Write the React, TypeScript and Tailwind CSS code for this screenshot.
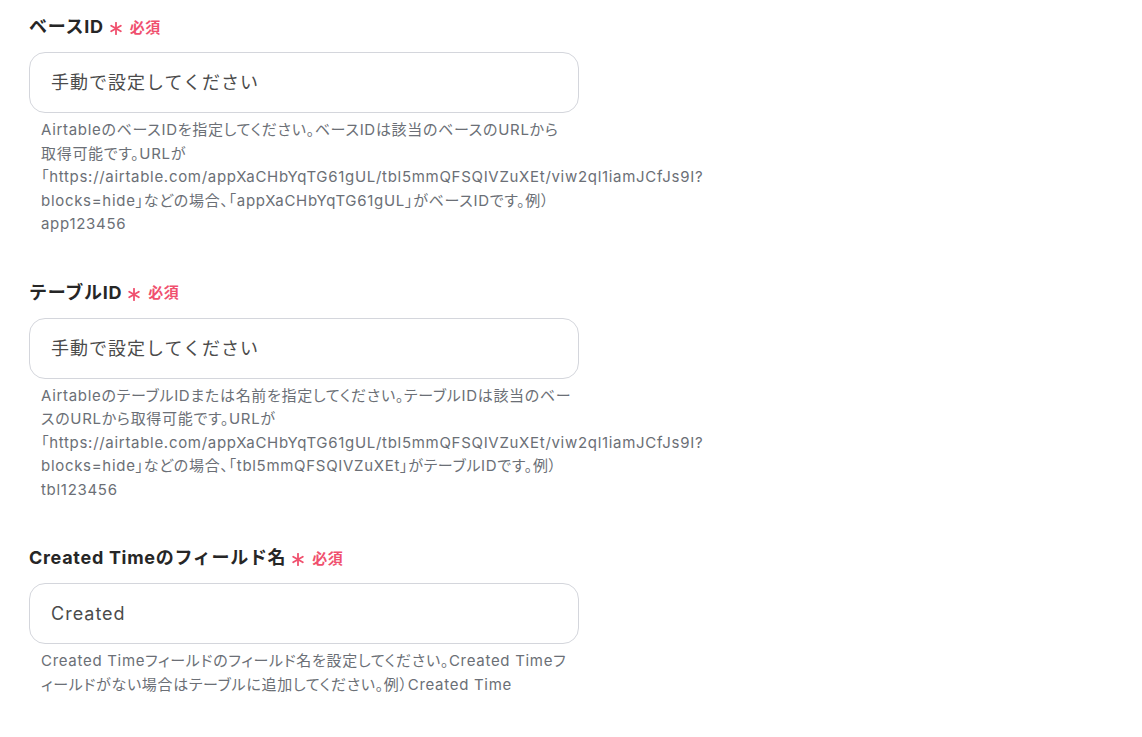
import React from "react";

const Asterisk = () => (
  <svg width="12" height="13" viewBox="0 0 12 13" className="ml-[6px] mr-[8px] mt-[3px]" aria-hidden>
    <g stroke="#f0506e" strokeWidth="1.8" strokeLinecap="round">
      <line x1="6" y1="0.8" x2="6" y2="12.2" />
      <line x1="1.2" y1="3.7" x2="10.8" y2="9.3" />
      <line x1="1.2" y1="9.3" x2="10.8" y2="3.7" />
    </g>
  </svg>
);

type FieldProps = { label: string; value: string; lines: string[] };

const Field = ({ label, value, lines }: FieldProps) => (
  <div className="flex flex-col">
    <div className="flex items-center h-[30px]">
      <span className="text-[18px] font-bold text-[#262626] leading-none tracking-[0.7px]">{label}</span>
      <Asterisk />
      <span className="text-[15px] font-bold text-[#f0506e] leading-none tracking-[0.5px]">必須</span>
    </div>
    <div className="mt-[10px] w-[550px] h-[61px] rounded-[16px] border border-[#d4d6dc] bg-white flex items-center px-[21px]">
      <span className="text-[18px] text-[#4b4b4b] tracking-[1px]">{value}</span>
    </div>
    <div
      className="mt-[5px] pl-[12px] text-[15px] leading-[23.5px] tracking-[0.7px] text-[#6b6f76] flex flex-col"
      style={{ fontFeatureSettings: '"palt"' }}
    >
      {lines.map((l, i) => (
        <span key={i} className="whitespace-nowrap">
          {l}
        </span>
      ))}
    </div>
  </div>
);

export default function App() {
  return (
    <div
      className="w-[1142px] h-[737px] bg-white pl-[29px] pt-[12px] flex flex-col gap-[42px]"
      style={{ fontFamily: "Inter, 'Noto Sans CJK JP', sans-serif" }}
    >
      <Field
        label="ベースID"
        value="手動で設定してください"
        lines={[
          "AirtableのベースIDを指定してください。ベースIDは該当のベースのURLから",
          "取得可能です。URLが",
          "「https://airtable.com/appXaCHbYqTG61gUL/tbl5mmQFSQIVZuXEt/viw2ql1iamJCfJs9I?",
          "blocks=hide」などの場合、「appXaCHbYqTG61gUL」がベースIDです。例）",
          "app123456",
        ]}
      />
      <Field
        label="テーブルID"
        value="手動で設定してください"
        lines={[
          "AirtableのテーブルIDまたは名前を指定してください。テーブルIDは該当のベー",
          "スのURLから取得可能です。URLが",
          "「https://airtable.com/appXaCHbYqTG61gUL/tbl5mmQFSQIVZuXEt/viw2ql1iamJCfJs9I?",
          "blocks=hide」などの場合、「tbl5mmQFSQIVZuXEt」がテーブルIDです。例）",
          "tbl123456",
        ]}
      />
      <Field
        label="Created Timeのフィールド名"
        value="Created"
        lines={[
          "Created Timeフィールドのフィールド名を設定してください。Created Timeフ",
          "ィールドがない場合はテーブルに追加してください。例）Created Time",
        ]}
      />
    </div>
  );
}
